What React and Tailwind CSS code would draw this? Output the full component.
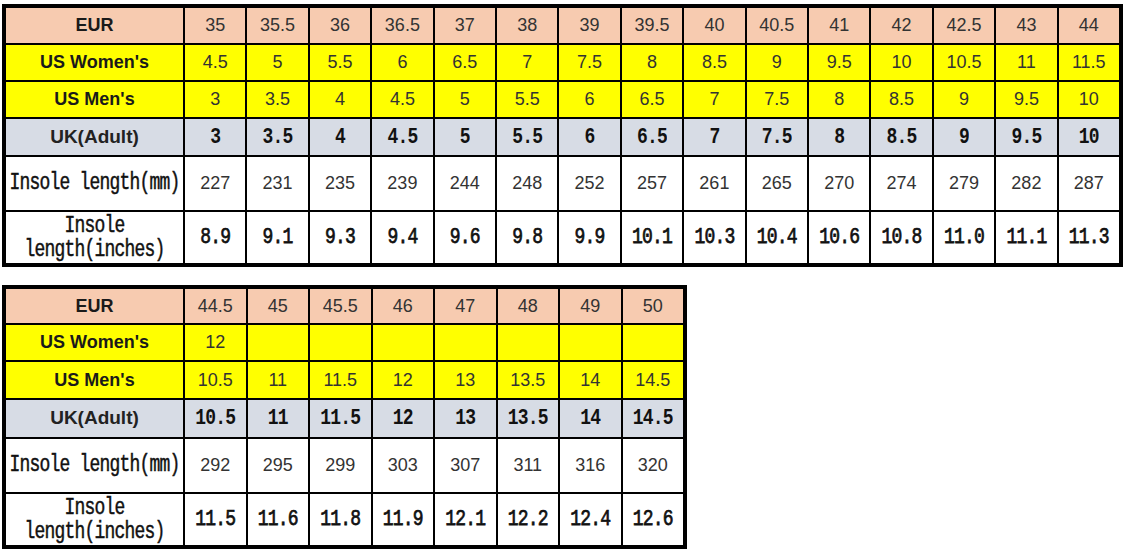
import React from 'react';

const sans = "font-['Liberation_Sans',Arial,sans-serif]";
const mono = "font-['Liberation_Mono','Courier_New',monospace] tracking-[-0.8px]";

const rowStyles = {
  eur: 'bg-[#f7cbb0]',
  women: 'bg-[#ffff00]',
  men: 'bg-[#ffff00]',
  uk: 'bg-[#d7dce5]',
  mm: 'bg-white',
  inch: 'bg-white',
};

const topTable = {
  cols: 'grid-cols-[177px_repeat(15,minmax(0,1fr))]',
  rows: 'grid-rows-[35px_35px_35px_36px_53px_51px]',
  width: 'w-[1121px]',
  eur: ['35', '35.5', '36', '36.5', '37', '38', '39', '39.5', '40', '40.5', '41', '42', '42.5', '43', '44'],
  women: ['4.5', '5', '5.5', '6', '6.5', '7', '7.5', '8', '8.5', '9', '9.5', '10', '10.5', '11', '11.5'],
  men: ['3', '3.5', '4', '4.5', '5', '5.5', '6', '6.5', '7', '7.5', '8', '8.5', '9', '9.5', '10'],
  uk: ['3', '3.5', '4', '4.5', '5', '5.5', '6', '6.5', '7', '7.5', '8', '8.5', '9', '9.5', '10'],
  mm: ['227', '231', '235', '239', '244', '248', '252', '257', '261', '265', '270', '274', '279', '282', '287'],
  inch: ['8.9', '9.1', '9.3', '9.4', '9.6', '9.8', '9.9', '10.1', '10.3', '10.4', '10.6', '10.8', '11.0', '11.1', '11.3'],
};

const bottomTable = {
  cols: 'grid-cols-[177px_repeat(8,minmax(0,1fr))]',
  rows: 'grid-rows-[34px_35px_36px_37px_53px_51px]',
  width: 'w-[685px]',
  eur: ['44.5', '45', '45.5', '46', '47', '48', '49', '50'],
  women: ['12', '', '', '', '', '', '', ''],
  men: ['10.5', '11', '11.5', '12', '13', '13.5', '14', '14.5'],
  uk: ['10.5', '11', '11.5', '12', '13', '13.5', '14', '14.5'],
  mm: ['292', '295', '299', '303', '307', '311', '316', '320'],
  inch: ['11.5', '11.6', '11.8', '11.9', '12.1', '12.2', '12.4', '12.6'],
};

function Label({ kind }) {
  const base = `flex items-center justify-center text-center ${rowStyles[kind]}`;
  if (kind === 'eur') return <div className={`${base} ${sans} text-[18px] font-bold text-[#1a1a1a]`}>EUR</div>;
  if (kind === 'women') return <div className={`${base} ${sans} text-[18px] font-bold text-[#1a1a1a]`}>US Women's</div>;
  if (kind === 'men') return <div className={`${base} ${sans} text-[18px] font-bold text-[#1a1a1a]`}>US Men's</div>;
  if (kind === 'uk') return <div className={`${base} ${sans} text-[19px] font-bold text-[#222]`}>UK(Adult)</div>;
  if (kind === 'mm')
    return (
      <div className={`${base} ${mono} text-[18px] text-[#111] [-webkit-text-stroke:0.35px_#111]`}>
        <span className="inline-block scale-y-[1.28]">Insole length(mm)</span>
      </div>
    );
  return (
    <div className={`${base} ${mono} flex-col text-[18px] leading-[24px] text-[#111] [-webkit-text-stroke:0.35px_#111]`}>
      <span className="inline-block scale-y-[1.28]">Insole</span>
      <span className="inline-block scale-y-[1.28]">length(inches)</span>
    </div>
  );
}

function Cell({ kind, value }) {
  let text = `${sans} text-[18px] text-[#333]`;
  if (kind === 'uk') text = `${mono} text-[18px] font-bold text-[#111]`;
  if (kind === 'inch') text = `${mono} text-[18px] text-[#111] [-webkit-text-stroke:0.6px_#111]`;
  const tall = kind === 'uk' || kind === 'inch';
  return (
    <div className={`flex items-center justify-center ${rowStyles[kind]} ${text}`}>
      {tall ? <span className="inline-block scale-y-[1.25]">{value}</span> : value}
    </div>
  );
}

function SizeTable({ data, className = '' }) {
  const kinds = ['eur', 'women', 'men', 'uk', 'mm', 'inch'];
  return (
    <div className={`grid ${data.cols} ${data.rows} ${data.width} gap-[2px] border-4 border-black bg-black ${className}`}>
      {kinds.map((kind) => (
        <React.Fragment key={kind}>
          <Label kind={kind} />
          {data[kind].map((v, i) => (
            <Cell key={i} kind={kind} value={v} />
          ))}
        </React.Fragment>
      ))}
    </div>
  );
}

export default function App() {
  return (
    <div className="w-[1127px] h-[551px] bg-white overflow-hidden pt-[4px] pl-[2px]">
      <SizeTable data={topTable} />
      <SizeTable data={bottomTable} className="mt-[18px]" />
    </div>
  );
}
